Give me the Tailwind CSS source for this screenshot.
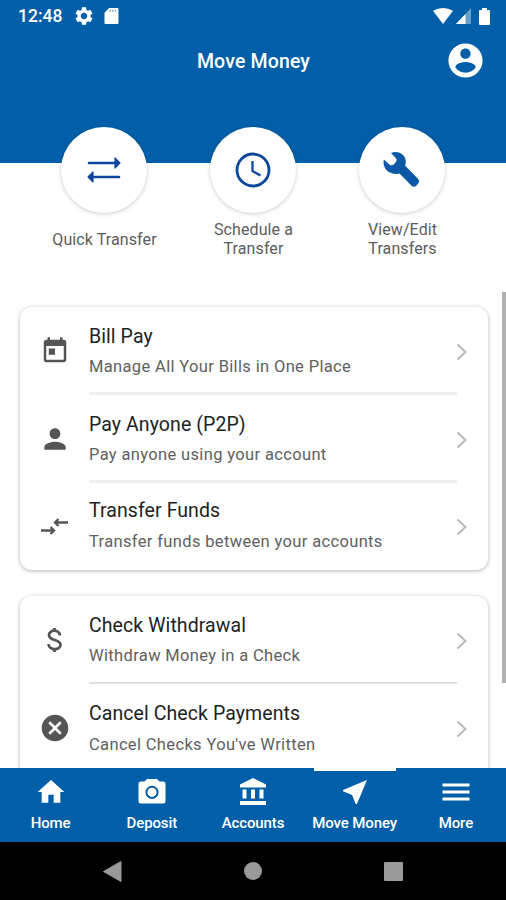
<!DOCTYPE html>
<html lang="en">
<head>
<meta charset="utf-8">
<title>Move Money</title>
<script src="https://cdn.jsdelivr.net/npm/@tailwindcss/browser@4"></script>
</head>
<body class="w-[506px] h-[900px] overflow-hidden bg-white font-['Roboto',sans-serif]">
<div class="relative flex flex-col w-[506px] h-[900px] overflow-hidden">
  <header class="h-[163px] shrink-0 bg-[#005fa8] text-white">
    <div class="flex h-8 items-center pl-[18px] pr-[16px]">
      <span class="w-[57px] pt-0.5 text-[17.500px] leading-none font-medium">12:48</span>
      <svg class="size-[18px]" viewBox="2 2 20 20" fill="currentColor"><path d="M19.140 12.940c.040-.3.060-.610.060-.940 0-.320-.020-.640-.070-.940l2.030-1.580c.180-.140.230-.410.120-.610l-1.920-3.320c-.120-.220-.370-.290-.590-.220l-2.390.960c-.5-.380-1.030-.7-1.620-.940l-.360-2.540c-.040-.240-.240-.410-.480-.410h-3.840c-.240 0-.430.170-.470.410l-.360 2.540c-.590.240-1.130.570-1.620.940l-2.390-.960c-.220-.080-.470 0-.590.220L2.740 8.870c-.120.210-.080.470.120.610l2.030 1.580c-.050.3-.090.630-.090.940s.020.640.070.940l-2.030 1.580c-.180.140-.230.410-.120.610l1.920 3.320c.120.220.370.290.590.220l2.390-.960c.5.380 1.030.7 1.620.940l.360 2.540c.050.240.240.410.480.410h3.840c.240 0 .440-.170.470-.410l.360-2.540c.590-.240 1.130-.560 1.620-.940l2.390.960c.220.080.470 0 .590-.220l1.920-3.320c.120-.220.070-.470-.120-.610l-2.010-1.580zM12 15.600c-1.980 0-3.600-1.620-3.600-3.600s1.620-3.600 3.600-3.600 3.600 1.620 3.600 3.600-1.620 3.600-3.600 3.600z"/></svg>
      <svg class="ml-[11px] h-4 w-[15px]" viewBox="0 0 15 16"><path fill="#fff" d="M5 0h8.500q1 0 1 1v14q0 1-1 1H1.500q-1 0-1-1V4.800z"/><path stroke="#005fa8" stroke-opacity=".55" stroke-width="1.300" d="M6.300 1.800v2M8.800 1.800v2M11.300 1.800v2"/></svg>
      <svg class="ml-auto h-4 w-5" viewBox="0 0 20 16"><path fill="#fff" d="M0 2.800Q10-2.600 20 2.800L10 16z"/></svg>
      <svg class="ml-[3px] h-4 w-[15px]" viewBox="0 0 15 16"><path fill="#fff" fill-opacity=".4" d="M15 0v16H0z"/><path fill="#fff" d="M9.500 5.900V16H0z"/></svg>
      <svg class="ml-[8px] h-[17px] w-[11px]" viewBox="0 0 11 17"><path fill="#fff" d="M3 0h5v2h2q1 0 1 1v13q0 1-1 1H1q-1 0-1-1V3q0-1 1-1h2z"/></svg>
    </div>
    <div class="relative flex h-[59px] items-center justify-center pl-px pt-px">
      <h1 class="text-[19.500px] leading-none font-medium tracking-[0.150px]">Move Money</h1>
      <svg class="absolute right-[20px] top-[8px] size-[41px]" viewBox="0 0 24 24" fill="currentColor"><path d="M12 2C6.480 2 2 6.480 2 12s4.480 10 10 10 10-4.480 10-10S17.520 2 12 2zm0 3c1.660 0 3 1.340 3 3s-1.340 3-3 3-3-1.340-3-3 1.340-3 3-3zm0 14.200c-2.500 0-4.710-1.280-6-3.220.030-1.990 4-3.080 6-3.080 1.990 0 5.970 1.090 6 3.080-1.290 1.940-3.500 3.220-6 3.220z"/></svg>
    </div>
  </header>

  <section class="relative z-10 -mt-9 grid h-[170px] shrink-0 grid-cols-3 px-[29.500px] text-center text-[16px] leading-[19px] tracking-[0.100px] text-[#5c5c5c]">
    <div class="flex flex-col items-center">
      <div class="flex size-[86px] items-center justify-center rounded-full bg-white shadow-[0_1px_4px_rgba(0,0,0,0.2)]">
        <svg class="h-[26px] w-[34px]" viewBox="0 0 34 26" fill="none" stroke="#0d479c" stroke-width="2.600" stroke-linecap="round" stroke-linejoin="round"><path d="M2 6H28M32 20H6"/><path fill="#0d479c" stroke-width="1.200" d="M28 1v10L33 6zM6 15v10L1 20z"/></svg>
      </div>
      <div class="flex h-[52px] items-center pl-px">Quick Transfer</div>
    </div>
    <div class="flex flex-col items-center">
      <div class="flex size-[86px] items-center justify-center rounded-full bg-white shadow-[0_1px_4px_rgba(0,0,0,0.2)]">
        <svg class="size-9" viewBox="0 0 36 36" fill="none" stroke="#0d479c" stroke-width="2.800"><circle cx="18" cy="18" r="16"/><path stroke-width="2.300" d="M17.500 9v10l8 4.500"/></svg>
      </div>
      <div class="flex h-[52px] items-center pl-px">Schedule a<br>Transfer</div>
    </div>
    <div class="flex flex-col items-center">
      <div class="flex size-[86px] items-center justify-center rounded-full bg-white shadow-[0_1px_4px_rgba(0,0,0,0.2)]">
        <svg class="size-10" viewBox="0 0 40 40" fill="#0b58a6"><path d="M9 3C14 .5 23 2.700 23.800 11Q24 13.500 23 15.500L36 28.800Q38 31 36.500 33L34.500 35.500Q32 37.800 29.800 36L17.500 23.500Q12 25 7 22C2.500 19.500 .8 14 1.800 9.500L8 15Q10.500 16 12 14.200L14.300 11.500Q15.200 9.500 13.800 8z"/></svg>
      </div>
      <div class="flex h-[52px] items-center pl-px">View/Edit<br>Transfers</div>
    </div>
  </section>

  <main class="relative flex min-h-0 flex-1 flex-col gap-[26px] overflow-hidden pt-[10px] pr-[18px] pl-5">
    <div class="h-[263px] shrink-0 rounded-[12px] bg-white shadow-[0_1px_4px_rgba(0,0,0,0.3)]">
      <div class="flex h-[88px]">
        <div class="flex w-[69px] items-center justify-center"><svg class="size-[30px]" viewBox="0 0 24 24" fill="#555"><path d="M19 3h-1V1h-2v2H8V1H6v2H5c-1.110 0-1.990.9-1.990 2L3 19c0 1.100.890 2 2 2h14c1.100 0 2-.9 2-2V5c0-1.100-.9-2-2-2zm0 16H5V8h14v11zM7 10h5v5H7z"/></svg></div>
        <div class="flex w-[368px] items-center justify-between border-b-[3px] border-[#efefef] pt-1">
          <div class="whitespace-nowrap"><div class="text-[19.500px] leading-[30px] tracking-[0.080px] text-[#222]">Bill Pay</div><div class="text-[16.500px] leading-[29px] tracking-[0.350px] text-[#606060]">Manage All Your Bills in One Place</div></div>
          <svg class="-mr-[11px] h-[18px] w-3" viewBox="0 0 12 18" fill="none" stroke="#b9b9b9" stroke-width="2"><path d="M1.500 1.500L9.500 9l-8 7.500"/></svg>
        </div>
      </div>
      <div class="flex h-[88px]">
        <div class="flex w-[69px] items-center justify-center"><svg class="size-8" viewBox="0 0 24 24" fill="#555"><path d="M12 12c2.210 0 4-1.790 4-4s-1.790-4-4-4-4 1.790-4 4 1.790 4 4 4zm0 2c-2.670 0-8 1.340-8 4v2h16v-2c0-2.660-5.330-4-8-4z"/></svg></div>
        <div class="flex w-[368px] items-center justify-between border-b-[3px] border-[#efefef] pt-1">
          <div class="whitespace-nowrap"><div class="text-[19.500px] leading-[30px] tracking-[0.080px] text-[#222]">Pay Anyone (P2P)</div><div class="text-[16.500px] leading-[29px] tracking-[0.350px] text-[#606060]">Pay anyone using your account</div></div>
          <svg class="-mr-[11px] h-[18px] w-3" viewBox="0 0 12 18" fill="none" stroke="#b9b9b9" stroke-width="2"><path d="M1.500 1.500L9.500 9l-8 7.500"/></svg>
        </div>
      </div>
      <div class="flex h-[87px]">
        <div class="flex w-[69px] items-center justify-center"><svg class="h-5 w-[27px]" viewBox="0 0 27 20" fill="none" stroke="#555" stroke-width="2.300"><path d="M0 13.500h12M9.500 10L13 13.500 9.500 17M27 5.500H15M17.500 2L14 5.500 17.500 9"/></svg></div>
        <div class="flex w-[368px] items-center justify-between">
          <div class="whitespace-nowrap"><div class="text-[19.500px] leading-[30px] tracking-[0.080px] text-[#222]">Transfer Funds</div><div class="text-[16.500px] leading-[31px] tracking-[0.350px] text-[#606060]">Transfer funds between your accounts</div></div>
          <svg class="-mr-[11px] h-[18px] w-3" viewBox="0 0 12 18" fill="none" stroke="#b9b9b9" stroke-width="2"><path d="M1.500 1.500L9.500 9l-8 7.500"/></svg>
        </div>
      </div>
    </div>
    <div class="h-[263px] shrink-0 rounded-[12px] bg-white shadow-[0_1px_4px_rgba(0,0,0,0.3)]">
      <div class="flex h-[88px]">
        <div class="flex w-[69px] items-center justify-center"><svg class="size-8" viewBox="0 0 32 32" fill="none" stroke="#555" stroke-width="2.800"><path d="M21 11.500C20.500 5 10 5.300 10 11c0 6.500 11.500 3.500 11.500 10C21.500 26.500 10 27 9.500 20M15.500 4V8M15.500 24v4"/></svg></div>
        <div class="flex w-[368px] items-center justify-between border-b-2 border-[#dfdfdf] pt-[3px]">
          <div class="whitespace-nowrap"><div class="text-[19.500px] leading-[30px] tracking-[0.080px] text-[#222]">Check Withdrawal</div><div class="text-[16.500px] leading-[29px] tracking-[0.350px] text-[#606060]">Withdraw Money in a Check</div></div>
          <svg class="-mr-[11px] h-[18px] w-3" viewBox="0 0 12 18" fill="none" stroke="#b9b9b9" stroke-width="2"><path d="M1.500 1.500L9.500 9l-8 7.500"/></svg>
        </div>
      </div>
      <div class="flex h-[88px]">
        <div class="flex w-[69px] items-center justify-center"><svg class="size-8" viewBox="0 0 24 24" fill="#555"><path d="M12 2C6.470 2 2 6.470 2 12s4.470 10 10 10 10-4.470 10-10S17.530 2 12 2zm5 13.590L15.590 17 12 13.410 8.410 17 7 15.590 10.590 12 7 8.410 8.410 7 12 10.590 15.590 7 17 8.410 13.410 12 17 15.590z"/></svg></div>
        <div class="flex w-[368px] items-center justify-between pt-0.5">
          <div class="whitespace-nowrap"><div class="text-[19.500px] leading-[30px] tracking-[0.080px] text-[#222]">Cancel Check Payments</div><div class="text-[16.500px] leading-[31px] tracking-[0.350px] text-[#606060]">Cancel Checks You've Written</div></div>
          <svg class="-mr-[11px] h-[18px] w-3" viewBox="0 0 12 18" fill="none" stroke="#b9b9b9" stroke-width="2"><path d="M1.500 1.500L9.500 9l-8 7.500"/></svg>
        </div>
      </div>
    </div>
  </main>

  <nav class="relative grid h-[74px] shrink-0 grid-cols-5 bg-[#005fa8] text-center text-[15px] leading-none font-medium tracking-[-0.120px] text-white">
    <div class="absolute left-[314px] top-0 h-[2.500px] w-[82px] bg-white"></div>
    <div class="flex flex-col items-center pt-2"><svg class="size-8" viewBox="0 0 24 24" fill="currentColor"><path d="M10 20v-6h4v6h5v-8h3L12 3 2 12h3v8z"/></svg><span class="mt-[8px]">Home</span></div>
    <div class="flex flex-col items-center pt-2"><svg class="size-8" viewBox="0 0 32 32"><path fill="#fff" d="M11 3h10l2.500 2.500H27q2.500 0 2.500 2.500v17q0 2.500-2.500 2.500H5q-2.500 0-2.500-2.500V8q0-2.500 2.500-2.500h3.500z"/><circle cx="16" cy="16.300" r="5.600" fill="none" stroke="#005fa8" stroke-width="2"/></svg><span class="mt-[8px]">Deposit</span></div>
    <div class="flex flex-col items-center pt-2"><svg class="size-8" viewBox="0 0 32 32" fill="#fff"><path d="M16 2l13 6.500V11.500H3V8.500zM5.500 13.500h4v9h-4zM14 13.500h4v9h-4zM22.500 13.500h4v9h-4zM3 25h26v4H3z"/></svg><span class="mt-[8px]">Accounts</span></div>
    <div class="flex flex-col items-center pt-2 pl-px"><svg class="size-8" viewBox="0 0 24 24" fill="currentColor"><path d="M21 3L3 10.530v.980l6.840 2.650L12.480 21h.980L21 3z"/></svg><span class="mt-[8px] whitespace-nowrap">Move Money</span></div>
    <div class="flex flex-col items-center pt-2 pl-px"><svg class="size-8" viewBox="0 0 32 32" stroke="#fff" stroke-width="3"><path d="M2.500 9h27M2.500 16h27M2.500 23h27"/></svg><span class="mt-[8px]">More</span></div>
  </nav>

  <div class="relative flex h-[58px] shrink-0 items-center justify-between bg-black pl-[103px] pr-[103px]">
    <svg class="h-[21px] w-[19px]" viewBox="0 0 19 21" fill="#999"><path d="M18 .5v20L.5 10.500z" stroke="#999" stroke-linejoin="round"/></svg>
    <div class="size-[18px] rounded-full bg-[#999]"></div>
    <div class="size-[19px] rounded-[1px] bg-[#999]"></div>
  </div>
  <div class="absolute right-0 top-[292px] h-[391px] w-1 bg-[#b1b1b1]"></div>
</div>
</body>
</html>
